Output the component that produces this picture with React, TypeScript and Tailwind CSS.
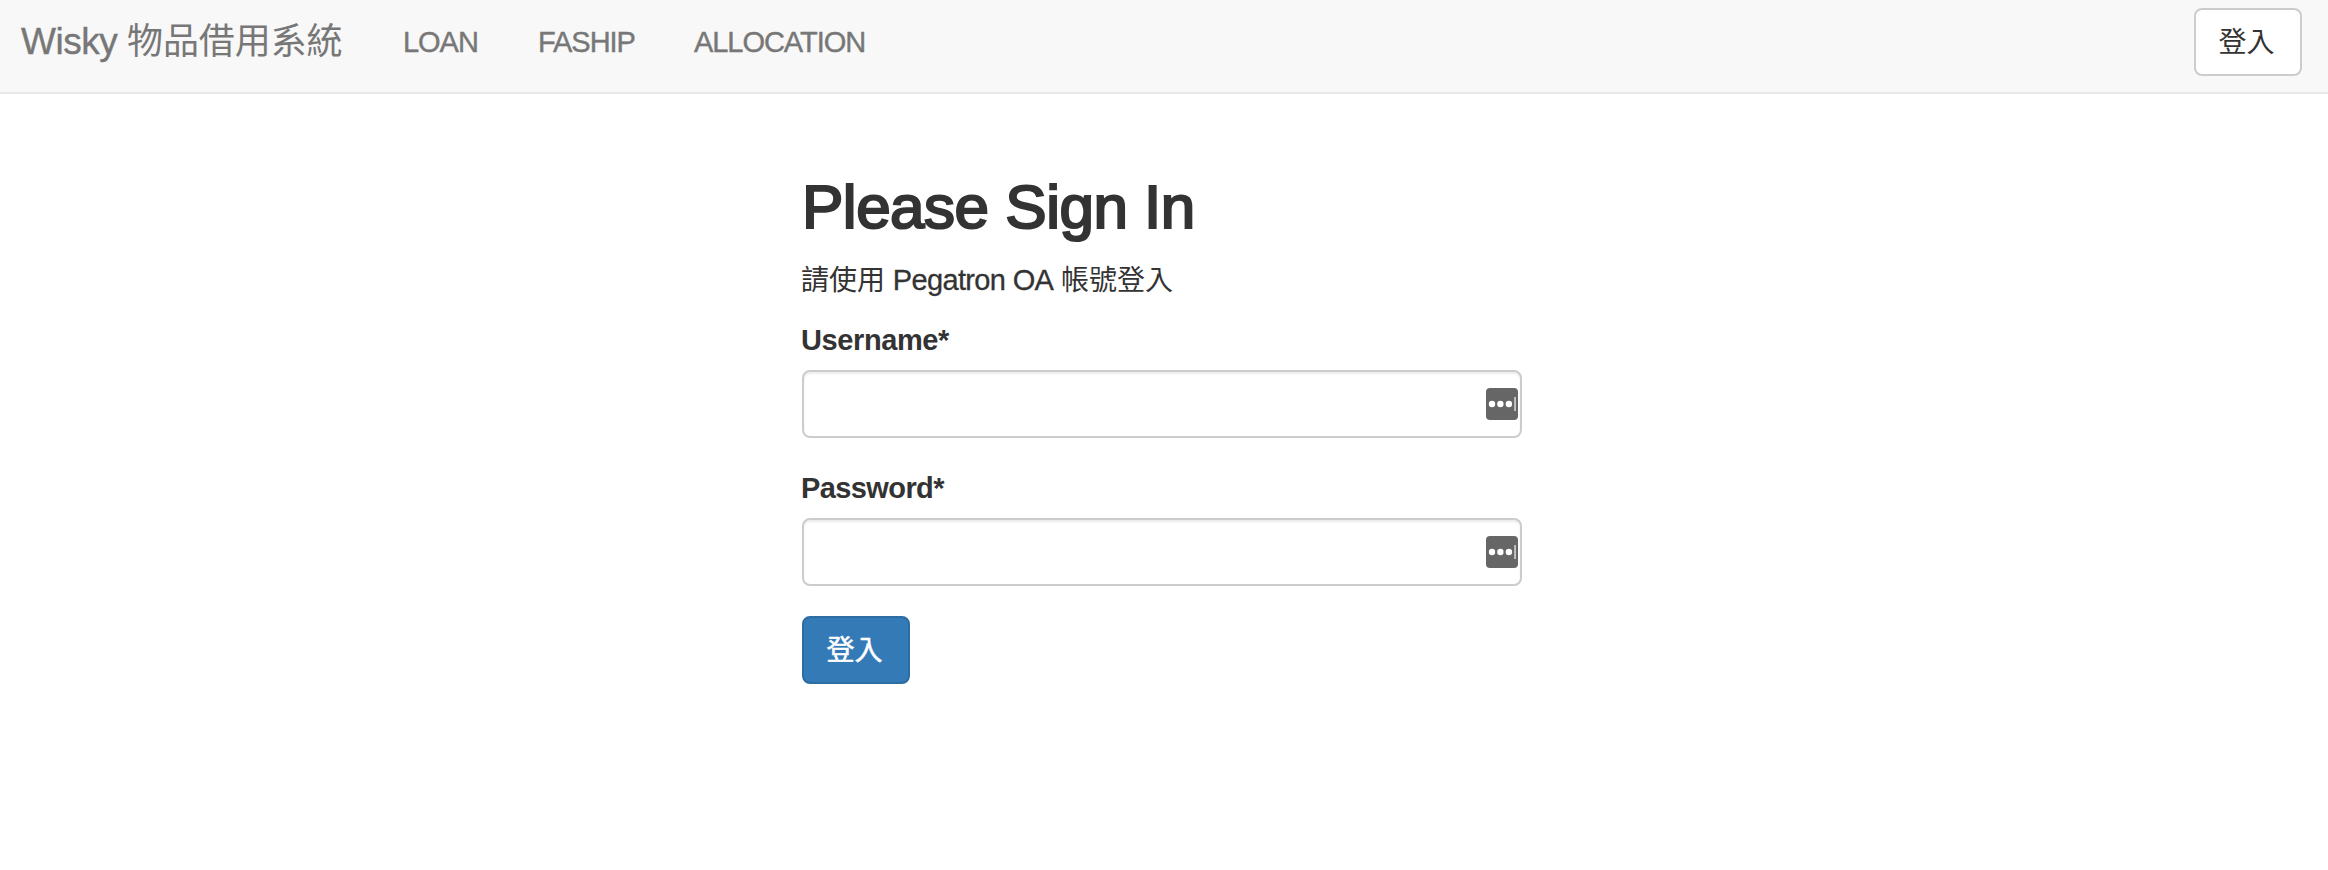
import React from "react";

const FONT = "font-['Liberation_Sans','Noto_Sans_CJK_TC',sans-serif]";

function PasswordManagerBadge() {
  return (
    <svg className="size-8 shrink-0" viewBox="0 0 32 32" aria-hidden="true">
      <rect width="32" height="32" rx="4" fill="#666" />
      <circle cx="6" cy="16" r="3.2" fill="#fff" />
      <circle cx="14.4" cy="16" r="3.2" fill="#fff" />
      <circle cx="22.9" cy="16" r="3.2" fill="#fff" />
      <rect x="28.3" y="9" width="1.5" height="14" fill="#ddd" />
    </svg>
  );
}

function Field({ id, label, type, labelClass }: { id: string; label: string; type: string; labelClass: string }) {
  return (
    <div className="mb-[30px] flex flex-col">
      <label htmlFor={id} className={`-ml-px mb-2.5 h-10 self-start text-[29px] font-bold leading-10 ${labelClass}`}>
        {label}
      </label>
      <div className="flex h-[68px] items-center rounded-lg border-2 border-[#ccc] bg-white pr-0.5 shadow-[inset_0_2px_2px_rgba(0,0,0,0.075)]">
        <input id={id} type={type} className="h-full min-w-0 flex-1 bg-transparent px-6 outline-none" />
        <PasswordManagerBadge />
      </div>
    </div>
  );
}

export default function App() {
  return (
    <div className={`min-h-[870px] bg-white text-[28px] text-[#333] ${FONT}`}>
      <nav className="flex h-[94px] items-start justify-between border-b-2 border-[#e7e7e7] bg-[#f8f8f8] pl-[21px] pr-[26px] text-[#777]">
        <div className="flex items-start whitespace-nowrap pt-[22px] text-[29px] leading-10 tracking-[-1.05px] [-webkit-text-stroke:0.4px_#777]">
          <a href="#" className="w-[382px] text-[36px] tracking-[-0.1px] [-webkit-text-stroke:0px]">
            <span className="text-[37px] tracking-[-0.5px] [-webkit-text-stroke:0.4px_#777]">Wisky</span> 物品借用系統
          </a>
          <a href="#" className="w-[135px]">LOAN</a>
          <a href="#" className="w-[156px]">FASHIP</a>
          <a href="#">ALLOCATION</a>
        </div>
        <button className="mt-2 flex h-[68px] w-[108px] items-center justify-center rounded-lg border-2 border-[#ccc] bg-white pr-[3px] pt-0.5 leading-10 text-[#333]">
          登入
        </button>
      </nav>
      <main className="ml-[802px] w-[720px] pt-20">
        <h2 className="h-[66px] whitespace-nowrap text-[62px] leading-[66px] tracking-[-0.5px] [-webkit-text-stroke:2.2px_#333]">Please Sign In</h2>
        <p className="-ml-px mb-5 mt-5 h-10 whitespace-nowrap leading-10">
          請使用 <span className="text-[29px] tracking-[-0.65px] [-webkit-text-stroke:0.3px_#333]">Pegatron OA</span> 帳號登入
        </p>
        <form onSubmit={(e) => e.preventDefault()}>
          <Field id="username" label="Username*" type="text" labelClass="tracking-[-0.4px]" />
          <Field id="password" label="Password*" type="password" labelClass="tracking-[-0.6px]" />
          <button className="flex h-[68px] w-[108px] items-center justify-center rounded-lg border-2 border-[#2e6da4] bg-[#337ab7] pr-[3px] pt-0.5 leading-10 text-white [-webkit-text-stroke:0.5px_#fff]">
            登入
          </button>
        </form>
      </main>
    </div>
  );
}
